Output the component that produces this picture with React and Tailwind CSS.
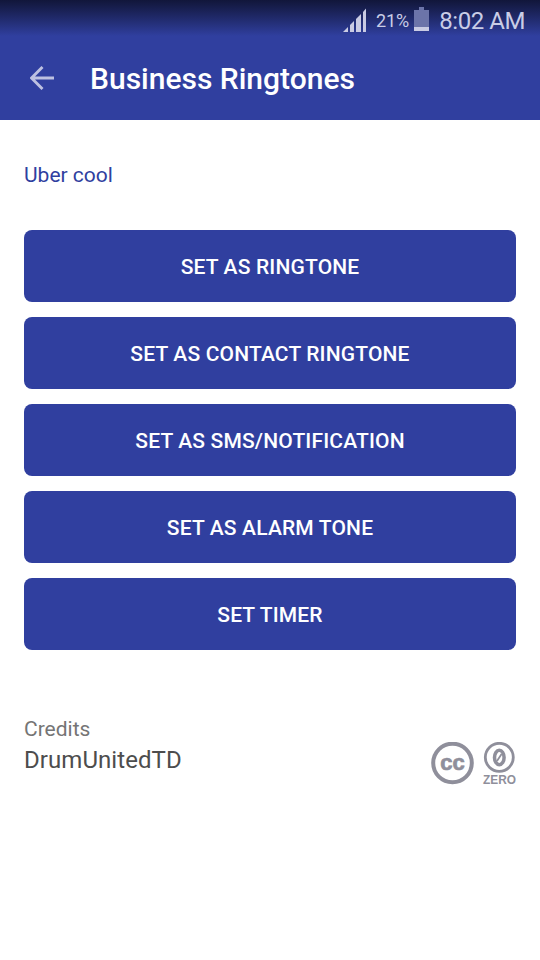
import { useState } from "react";

const actions = [
  "Set as ringtone",
  "Set as contact ringtone",
  "Set as SMS/notification",
  "Set as alarm tone",
  "Set timer",
];

function StatusBar() {
  return (
    <div className="h-9 flex justify-end pr-[15px] text-[#c9cde6] bg-linear-to-b from-[#11163a] to-[#303f9f]">
      <svg width="24" height="24" viewBox="0 0 24 24" className="mt-2 mr-[9px]" fill="#c9cbe3">
        <path d="M0 24L5 19V24Z" />
        <path d="M7 17L11 13V24H7Z" />
        <path d="M13 11L18 6V24H13Z" />
        <path d="M20 4L23 0.5V24H20Z" />
      </svg>
      <span className="mt-[9px] text-[18px] leading-6 whitespace-nowrap">21%</span>
      <svg width="15" height="24" viewBox="0 0 15 24" className="mt-[7px] ml-[5px] mr-[10px]">
        <path d="M5 0H10V3H15V24H0V3H5Z" fill="#6c74a9" />
        <path d="M0 20H15V24H0Z" fill="#c9cbe3" />
      </svg>
      <span className="mt-[7px] text-[24px] leading-7 tracking-[-0.45px] whitespace-nowrap">8:02 AM</span>
    </div>
  );
}

function LicenseBadge() {
  return (
    <svg
      width="86"
      height="44"
      viewBox="0 0 86 44"
      className="mt-[27px] shrink-0"
      fontFamily="Liberation Sans, sans-serif"
      fontWeight="bold"
      textAnchor="middle"
      fill="#8f8f9b"
    >
      {/* cc */}
      <circle cx="22.5" cy="21" r="19.3" fill="none" stroke="#8f8f9b" strokeWidth="4" />
      <text x="22.5" y="27.5" fontSize="21.5" textLength="24.5" lengthAdjust="spacingAndGlyphs" stroke="#8f8f9b" strokeWidth="0.7">
        cc
      </text>
      {/* zero */}
      <circle cx="69.3" cy="15.3" r="14" fill="none" stroke="#8f8f9b" strokeWidth="2.8" />
      <ellipse cx="69.3" cy="15.5" rx="4.8" ry="7.2" fill="none" stroke="#8f8f9b" strokeWidth="3.5" />
      <path d="M67 19L71.6 12" stroke="#8f8f9b" strokeWidth="1.8" />
      <text x="69.5" y="42" fontSize="12" textLength="33" lengthAdjust="spacingAndGlyphs">
        ZERO
      </text>
    </svg>
  );
}

export default function App() {
  const [selected, setSelected] = useState("");

  return (
    <div className="w-[540px] h-[960px] overflow-hidden bg-white font-['Roboto',sans-serif]">
      <header className="h-[120px] bg-[#303f9f]">
        <StatusBar />
        <div className="h-[84px] flex items-center pl-[30px]">
          <button aria-label="Back">
            <svg width="25" height="24" viewBox="0 0 25 24" fill="none" stroke="#bdc1e1" strokeWidth="2.9">
              <path d="M24 12H2M12.5 1L1.5 12L12.5 23" />
            </svg>
          </button>
          <h1 className="ml-[35px] pt-0.5 text-[30px] leading-9 font-medium text-white">Business Ringtones</h1>
        </div>
      </header>

      <main className="px-6 pt-[41px]">
        <p className="text-[21px] leading-7 text-[#303f9f]">Uber cool</p>

        <div className="mt-[41px] flex flex-col gap-[15px]">
          {actions.map((action) => (
            <button
              key={action}
              onClick={() => setSelected(action)}
              aria-pressed={selected === action}
              className="h-[72px] pt-[3px] rounded-lg bg-[#303f9f] text-[21px] font-medium tracking-[0.16px] uppercase text-white"
            >
              {action}
            </button>
          ))}
        </div>

        <div className="mt-[65px] flex justify-between">
          <div>
            <p className="text-[21px] leading-7 text-[#757575]">Credits</p>
            <p className="mt-px text-[24px] leading-8 tracking-[0.06px] text-[#4d4d4d]">DrumUnitedTD</p>
          </div>
          <LicenseBadge />
        </div>
      </main>
    </div>
  );
}
